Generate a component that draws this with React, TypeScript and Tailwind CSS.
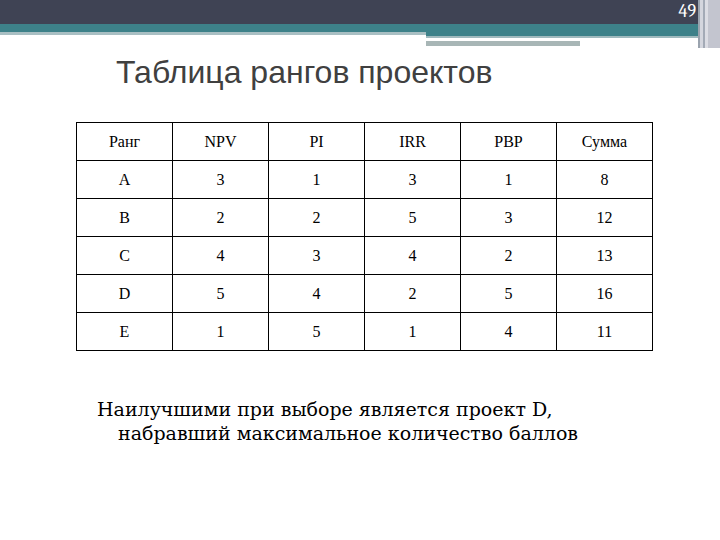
const rows = [
  ["Ранг", "NPV", "PI", "IRR", "PBP", "Сумма"],
  ["A", "3", "1", "3", "1", "8"],
  ["B", "2", "2", "5", "3", "12"],
  ["C", "4", "3", "4", "2", "13"],
  ["D", "5", "4", "2", "5", "16"],
  ["E", "1", "5", "1", "4", "11"],
]

function SlideHeader() {
  return (
    <div className="flex items-start h-[48px]">
      <div className="w-[426px] flex flex-col">
        <div className="h-[24px] bg-[#3f4354]" />
        <div className="h-[8px] bg-[#3d8189]" />
        <div className="h-[3px] bg-[#a9bfc3]" />
      </div>
      <div className="w-[272px] flex flex-col">
        <div className="h-[24px] bg-[#3f4354] flex justify-end items-center pr-[2px] text-[18px] leading-[20px] text-white font-serif">
          49
        </div>
        <div className="h-[12px] bg-[#3d8189]" />
        <div className="h-[2px] bg-[#9fb9bd]" />
        <div className="h-[3px] w-[242px] bg-white" />
        <div className="h-[5px] w-[154px] bg-[#a8b6b6]" />
      </div>
      <div className="w-[22px] h-[48px] flex">
        <div className="w-[2px] bg-[#9aa3ae]" />
        <div className="w-[3px] bg-[#d4d6de]" />
        <div className="w-[2px] bg-[#a3aab6]" />
        <div className="w-[3px] bg-[#dcdde4]" />
        <div className="flex-1 bg-[#c3c5cf]" />
      </div>
    </div>
  )
}

export default function App() {
  return (
    <div className="w-[720px] h-[540px] bg-white overflow-hidden">
      <SlideHeader />

      <h1 className="ml-[116px] mt-[5px] text-[32px] leading-[38px] text-[#404040] font-[Liberation_Sans,sans-serif]">
        Таблица рангов проектов
      </h1>

      <table className="ml-[76px] mt-[31px] w-[577px] border-collapse table-fixed font-[Times_New_Roman,Times,serif] text-[16px] text-black">
        <tbody>
          {rows.map((row, i) => (
            <tr key={i}>
              {row.map((cell, j) => (
                <td key={j} className="h-[38px] border border-black text-center align-middle p-0">
                  {cell}
                </td>
              ))}
            </tr>
          ))}
        </tbody>
      </table>

      <div className="ml-[97px] mt-[46px] text-[19px] leading-[24px] text-black font-[DejaVu_Serif,serif]">
        <div>Наилучшими при выборе является проект D,</div>
        <div className="ml-[21px]">набравший максимальное количество баллов</div>
      </div>
    </div>
  )
}
